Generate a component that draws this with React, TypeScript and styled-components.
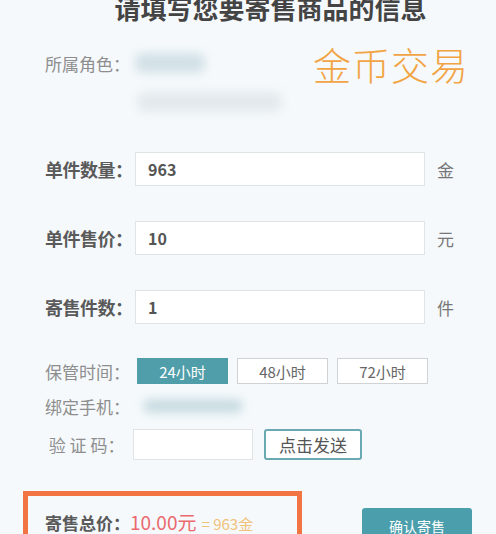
import React from 'react';
import styled, { createGlobalStyle } from 'styled-components';

const GlobalStyle = createGlobalStyle`
  html, body {
    margin: 0;
    padding: 0;
    background: #f5f9fc;
  }
  body {
    font-family: "Noto Sans CJK SC", "Noto Sans", sans-serif;
    color: #555;
  }
`;

const Page = styled.div`
  width: 496px;
  height: 534px;
  overflow: hidden;
  padding-left: 45px;
  box-sizing: border-box;
  display: flex;
  flex-direction: column;
`;

const Title = styled.h2`
  margin: -5px 0 0;
  font-size: 26px;
  line-height: 26px;
  font-weight: 700;
  color: #444;
  text-align: center;
`;

const InfoRow = styled.div`
  display: flex;
  justify-content: space-between;
  padding-right: 27px;
  margin-top: 27px;
`;

const RoleCol = styled.div`
  display: flex;
  flex-direction: column;
`;

const RoleLine = styled.div`
  display: flex;
  align-items: center;
  height: 30px;
`;

const SmallLabel = styled.span<{ $width?: number }>`
  display: inline-block;
  width: ${(p) => p.$width ?? 90}px;
  font-size: 17px;
  color: #8e8e8e;
  white-space: nowrap;
`;

const Blur = styled.div<{ $w: number; $h: number; $color: string }>`
  width: ${(p) => p.$w}px;
  height: ${(p) => p.$h}px;
  background: ${(p) => p.$color};
  border-radius: 8px;
  filter: blur(5px);
`;

const BlurLine = styled.div`
  margin: 14px 0 0 92px;
`;

const Brand = styled.div`
  font-size: 38px;
  line-height: 38px;
  font-weight: 300;
  color: #f2a444;
  margin-top: -3px;
  letter-spacing: 1px;
`;

const FieldRow = styled.div<{ $top: number }>`
  display: flex;
  align-items: center;
  height: 34px;
  margin-top: ${(p) => p.$top}px;
`;

const BoldLabel = styled.label`
  width: 90px;
  font-size: 18px;
  font-weight: 700;
  color: #5a5a5a;
  white-space: nowrap;
  letter-spacing: -0.5px;
`;

const TextInput = styled.input<{ $w: number; $h: number }>`
  width: ${(p) => p.$w}px;
  height: ${(p) => p.$h}px;
  box-sizing: border-box;
  border: 1px solid #dfe4e7;
  background: #fff;
  padding: 0 12px;
  font-family: inherit;
  font-size: 16px;
  font-weight: 700;
  color: #555;
  outline: none;
`;

const Unit = styled.span`
  margin-left: 12px;
  font-size: 17px;
  color: #777;
`;

const TimeButton = styled.button<{ $active?: boolean }>`
  width: 91px;
  height: 26px;
  margin-right: 9px;
  box-sizing: border-box;
  border: 1px solid ${(p) => (p.$active ? '#4f9ea9' : '#cfd3d5')};
  background: ${(p) => (p.$active ? '#4f9ea9' : '#fff')};
  color: ${(p) => (p.$active ? '#fff' : '#666')};
  font-family: inherit;
  font-size: 15px;
  padding: 0;
`;

const PlainRow = styled.div<{ $top: number; $h: number }>`
  display: flex;
  align-items: center;
  height: ${(p) => p.$h}px;
  margin-top: ${(p) => p.$top}px;
`;

const SendButton = styled.button`
  width: 98px;
  height: 31px;
  margin-left: 11px;
  box-sizing: border-box;
  border: 2px solid #6aa9b1;
  border-radius: 3px;
  background: #fff;
  color: #555;
  font-family: inherit;
  font-size: 17px;
  padding: 0;
`;

const Divider = styled.div`
  height: 1px;
  background: #e3e8eb;
  margin-top: 22px;
`;

const TotalRow = styled.div`
  display: flex;
  align-items: flex-start;
  margin-top: 9px;
`;

const TotalBox = styled.div`
  width: 279px;
  height: 56px;
  margin-left: -22px;
  box-sizing: border-box;
  border: 5px solid #f37443;
  padding: 12px 0 0 17px;
  display: flex;
  align-items: baseline;
  white-space: nowrap;
`;

const TotalLabel = styled.span`
  font-size: 17px;
  font-weight: 700;
  color: #5a5a5a;
`;

const Price = styled.span`
  font-size: 19px;
  color: #ea6a6e;
`;

const Gold = styled.span`
  font-size: 15px;
  color: #f0c27a;
  margin-left: 5px;
`;

const ConfirmButton = styled.button`
  width: 110px;
  height: 36px;
  margin: 17px 0 0 60px;
  border: none;
  border-radius: 3px;
  background: #4b9eab;
  color: #fff;
  font-family: inherit;
  font-size: 14px;
  padding: 0;
`;

const App: React.FC = () => {
  return (
    <Page>
      <GlobalStyle />
      <Title>请填写您要寄售商品的信息</Title>
      <InfoRow>
        <RoleCol>
          <RoleLine>
            <SmallLabel>所属角色：</SmallLabel>
            <Blur $w={70} $h={20} $color="#d3e1e6" />
          </RoleLine>
          <BlurLine>
            <Blur $w={145} $h={20} $color="#e3e9ed" />
          </BlurLine>
        </RoleCol>
        <Brand>金币交易</Brand>
      </InfoRow>
      <FieldRow $top={40}>
        <BoldLabel>单件数量：</BoldLabel>
        <TextInput $w={290} $h={34} defaultValue="963" />
        <Unit>金</Unit>
      </FieldRow>
      <FieldRow $top={35}>
        <BoldLabel>单件售价：</BoldLabel>
        <TextInput $w={290} $h={34} defaultValue="10" />
        <Unit>元</Unit>
      </FieldRow>
      <FieldRow $top={35}>
        <BoldLabel>寄售件数：</BoldLabel>
        <TextInput $w={290} $h={34} defaultValue="1" />
        <Unit>件</Unit>
      </FieldRow>
      <PlainRow $top={34} $h={26}>
        <SmallLabel $width={92}>保管时间：</SmallLabel>
        <TimeButton $active>24小时</TimeButton>
        <TimeButton>48小时</TimeButton>
        <TimeButton>72小时</TimeButton>
      </PlainRow>
      <PlainRow $top={11} $h={22}>
        <SmallLabel $width={98}>绑定手机：</SmallLabel>
        <Blur $w={100} $h={14} $color="#c9dce1" />
      </PlainRow>
      <PlainRow $top={12} $h={31}>
        <SmallLabel $width={88}>&nbsp;验 证 码：</SmallLabel>
        <TextInput $w={120} $h={31} />
        <SendButton>点击发送</SendButton>
      </PlainRow>
      <Divider />
      <TotalRow>
        <TotalBox>
          <TotalLabel>寄售总价：</TotalLabel>
          <Price>10.00元</Price>
          <Gold>= 963金</Gold>
        </TotalBox>
        <ConfirmButton>确认寄售</ConfirmButton>
      </TotalRow>
    </Page>
  );
};

export default App;
